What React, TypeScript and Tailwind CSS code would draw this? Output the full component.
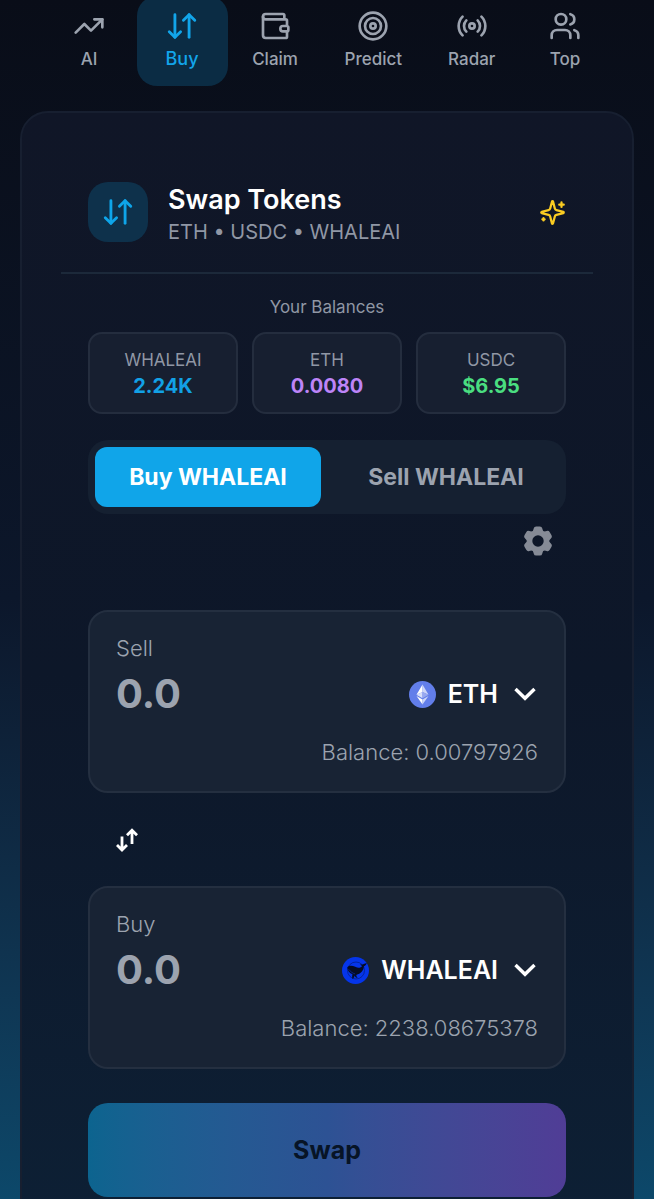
import { useState } from 'react';
import { ArrowDownUp, Radio, Target, TrendingUp, Users, Wallet, type LucideIcon } from 'lucide-react';

interface NavItem {
  label: string;
  icon: LucideIcon;
}

const navItems: NavItem[] = [
  { label: 'AI', icon: TrendingUp },
  { label: 'Buy', icon: ArrowDownUp },
  { label: 'Claim', icon: Wallet },
  { label: 'Predict', icon: Target },
  { label: 'Radar', icon: Radio },
  { label: 'Top', icon: Users },
];

const balances = [
  { label: 'WHALEAI', value: '2.24K', color: 'text-[#12a1e6]' },
  { label: 'ETH', value: '0.0080', color: 'text-[#bd84f8]' },
  { label: 'USDC', value: '$6.95', color: 'text-[#4ade80]' },
];

function SparklesIcon() {
  return (
    <svg viewBox="0 0 24 24" className="size-[27px] text-[#facc22]" fill="none" stroke="currentColor" strokeWidth="2" strokeLinecap="round" strokeLinejoin="round" aria-hidden="true">
      <path d="M9.937 15.5A2 2 0 0 0 8.5 14.063l-6.135-1.582a.5.5 0 0 1 0-.962L8.5 9.936A2 2 0 0 0 9.937 8.5l1.582-6.135a.5.5 0 0 1 .963 0L14.063 8.5A2 2 0 0 0 15.5 9.937l6.135 1.581a.5.5 0 0 1 0 .964L15.5 14.063a2 2 0 0 0-1.437 1.437l-1.582 6.135a.5.5 0 0 1-.963 0z" />
      <path d="M20 3v4M22 5h-4M4 17v2M5 18H3" />
    </svg>
  );
}

function GearIcon() {
  return (
    <svg viewBox="-15 -15 30 30" className="size-[30px] text-[#868b96]" fill="currentColor" aria-hidden="true">
      <circle r="8.5" fill="none" stroke="currentColor" strokeWidth="5.6" />
      {[0, 60, 120, 180, 240, 300].map((angle) => (
        <path key={angle} transform={`rotate(${angle})`} d="M-5.2-9.500L-4.300-12.400Q-3.900-14.600-1.800-14.600H1.800Q3.900-14.600 4.300-12.400L5.200-9.500L3.500-8H-3.500Z" />
      ))}
    </svg>
  );
}

function FlipIcon() {
  return (
    <svg viewBox="0 0 22 24" className="h-6 w-[22px]" fill="none" stroke="currentColor" strokeWidth="2.8" aria-hidden="true">
      <path d="M6 8.5v13M1 17l5 5 5-5M16 16V2.5M11 7.2l5-5 5 5" />
    </svg>
  );
}

function ChevronIcon() {
  return (
    <svg viewBox="0 0 22 14" className="h-[14px] w-[22px]" fill="none" stroke="currentColor" strokeWidth="3.4" aria-hidden="true">
      <path d="M1.5 2l9.5 9.3L20.5 2" />
    </svg>
  );
}

function EthLogo() {
  return (
    <svg viewBox="0 0 27 27" className="size-[27px]" aria-hidden="true">
      <circle cx="13.5" cy="13.5" r="13.5" fill="#627eea" />
      <path d="M13.5 3.5L7.5 13.7l6-2.7z" fill="#fff" />
      <path d="M13.5 3.5l6 10.2-6-2.7z" fill="#cdd6f8" />
      <path d="M7.5 13.7l6-2.7v6.2z" fill="#d8dffa" />
      <path d="M19.5 13.7l-6-2.7v6.2z" fill="#98a9f0" />
      <path d="M7.5 15l6 3.6v4.9z" fill="#fff" />
      <path d="M19.5 15l-6 3.6v4.9z" fill="#cdd6f8" />
    </svg>
  );
}

function WhaleLogo() {
  return (
    <svg viewBox="0 0 27 27" className="size-[27px]" aria-hidden="true">
      <circle cx="13.5" cy="13.5" r="13.5" fill="#0535ea" />
      <circle cx="14" cy="13.5" r="8.5" fill="none" stroke="#04208a" strokeWidth="0.8" />
      <path d="M5.3 10.6C6.3 8.4 10 8.3 13.2 9.8c3 1.4 5.5 1.2 7-.9-1-.3-1.7-.8-2-1.6 1.4.2 2.5.1 3.5-.4 1-.5 2.1-.5 3.1-.9-.4 1.5-1.4 2.5-2.9 3.3-.2 4.2-3.1 7.6-7.700 8.600.2 1.300.7 2.300 1.500 3.100-1.500-.2-2.600-1.100-3.200-2.600-.2 1.500-.7 2.700-1.900 3.600-.6-1.300-.6-2.900-.1-4.700-2.900-.9-5-3.500-5.200-6.700z" fill="#050c24" />
      <path d="M6.5 12.2c2.2 2.5 4 4 6.5 4.7" fill="none" stroke="#0a2fc0" strokeWidth="0.6" />
    </svg>
  );
}

interface TokenPanelProps {
  id: string;
  label: string;
  token: string;
  balance: string;
  logo: React.ReactNode;
}

function TokenPanel({ id, label, token, balance, logo }: TokenPanelProps) {
  const [amount, setAmount] = useState('');

  return (
    <div className="flex h-[183px] flex-col rounded-[20px] border-2 border-[#242f40] bg-[#182334] px-[26px] pt-5">
      <label htmlFor={id} className="text-[22px] leading-8 font-light text-[#9ca3af]">{label}</label>
      <div className="flex h-[60px] items-center justify-between">
        <input
          id={id}
          value={amount}
          onChange={(e) => setAmount(e.target.value)}
          placeholder="0.0"
          inputMode="decimal"
          className="w-0 min-w-0 flex-1 bg-transparent text-[40px] leading-[60px] font-bold text-white outline-none placeholder:text-[#9ca3af]"
        />
        <button type="button" className="flex items-center gap-3 pr-[2px] text-[25px] leading-8 font-semibold text-white">
          {logo}
          {token}
          <span className="ml-1"><ChevronIcon /></span>
        </button>
      </div>
      <p className="mt-3 text-right text-[22px] leading-8 font-light text-[#9ca3af]">Balance: {balance}</p>
    </div>
  );
}

export default function App() {
  const [activeNav, setActiveNav] = useState('Buy');
  const [side, setSide] = useState('Buy');

  return (
    <div className="h-screen overflow-hidden bg-linear-to-b from-[#090d18] via-[#0c172b] to-[#0c486a] font-[Inter,sans-serif]">
      <nav className="-mt-1 flex justify-center gap-[2px]">
        {navItems.map(({ label, icon: Icon }) => (
          <button
            key={label}
            type="button"
            onClick={() => setActiveNav(label)}
            className={`flex h-[90px] min-w-[91px] flex-col items-center rounded-[20px] px-[22px] pt-[13px] font-medium ${
              activeNav === label ? 'bg-[#0b2c44] text-lg/8 text-[#12a5ea]' : 'text-[17px] leading-8 text-[#9ca3af]'
            }`}
          >
            <span className="flex h-[34px] items-center">
              <Icon className={activeNav === label ? 'size-[34px]' : 'size-8'} />
            </span>
            {label}
          </button>
        ))}
      </nav>

      <main className="mx-5 mt-[25px] rounded-[28px] border-2 border-[#171f30] bg-linear-to-b from-[#101627] via-[#0d1729] to-[#0d2035] px-[39px] pt-[69px] pb-10">
        <header className="flex items-start border-b-2 border-[#1c293a] px-[27px] pb-6">
          <div className="flex size-[60px] items-center justify-center rounded-[20px] bg-[#0e314b] text-[#0ea5e9]">
            <ArrowDownUp className="size-[34px]" />
          </div>
          <div className="ml-5 flex-1 pt-[2px]">
            <h1 className="text-[27px] leading-8 font-semibold text-white">Swap Tokens</h1>
            <p className="text-[20px] leading-8 text-[#9097a5]">ETH • USDC • WHALEAI</p>
          </div>
          <div className="flex h-[60px] items-center">
            <SparklesIcon />
          </div>
        </header>

        <div className="px-[27px] pt-5">
          <p className="text-center text-[17px] leading-[26px] text-[#9097a5]">Your Balances</p>
          <div className="mt-3 grid grid-cols-3 gap-[14px]">
            {balances.map(({ label, value, color }) => (
              <div key={label} className="flex h-[82px] flex-col items-center justify-center rounded-[14px] border-2 border-[#242d3e] bg-[#171f30]">
                <span className="text-[17px] leading-[26px] text-[#9097a5]">{label}</span>
                <span className={`text-[20px] leading-[26px] font-bold ${color}`}>{value}</span>
              </div>
            ))}
          </div>

          <div className="mt-[26px] grid h-[74px] grid-cols-2 gap-3 rounded-[20px] bg-[#152031] p-[7px]">
            {['Buy', 'Sell'].map((item) => (
              <button
                key={item}
                type="button"
                onClick={() => setSide(item)}
                className={`rounded-xl text-[23px] leading-8 font-bold ${
                  side === item ? 'bg-[#10a5e9] text-white' : 'text-[#9ca3af]'
                }`}
              >
                {item} WHALEAI
              </button>
            ))}
          </div>

          <div className="mt-3 flex justify-end pr-[13px]">
            <button type="button" aria-label="Settings">
              <GearIcon />
            </button>
          </div>

          <div className="mt-[54px]">
            <TokenPanel id="sell-amount" label="Sell" token="ETH" balance="0.00797926" logo={<EthLogo />} />
            <div className="flex h-[93px] items-center pl-7">
              <button type="button" aria-label="Switch tokens" className="text-white">
                <FlipIcon />
              </button>
            </div>
            <TokenPanel id="buy-amount" label="Buy" token="WHALEAI" balance="2238.08675378" logo={<WhaleLogo />} />
          </div>

          <button type="button" className="mt-[34px] h-[94px] w-full rounded-[20px] bg-linear-to-r from-[#0c648f] via-[#2d5294] to-[#503d96] text-[25px] leading-8 font-bold text-[#071426]">
            Swap
          </button>
        </div>
      </main>
    </div>
  );
}
